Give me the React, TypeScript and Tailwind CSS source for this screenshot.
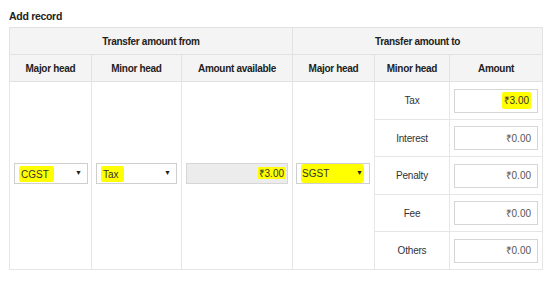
import React from 'react';

const font = { fontFamily: '"Liberation Sans", Arial, sans-serif' };

function Select({ value, wide }: { value: string; wide?: boolean }) {
  // fake select box with highlighter marks on the value
  return (
    <div className="h-[21px] border border-[#cfcfcf] bg-white flex items-center pl-[4px] pr-[5px] text-[10px] text-[#333]">
      {wide ? (
        <div className="flex-1 flex items-center justify-between bg-[#ffff00] h-[19px] rounded-[3px] pl-[1px] pr-[1px]">
          <span>{value}</span>
          <span className="text-[7px] text-[#222]">▼</span>
        </div>
      ) : (
        <>
          <span className="bg-[#ffff00] h-[16px] flex items-center px-[2px] pr-[5px] mt-[2px] rounded-[2px]">{value}</span>
          <span className="ml-auto text-[7px] text-[#222]">▼</span>
        </>
      )}
    </div>
  );
}

function Amount({ value, mark }: { value: string; mark?: boolean }) {
  return (
    <div className="h-[24px] border border-[#d6d6d6] bg-white flex items-center justify-end pr-[6px] text-[10px] text-[#555]">
      {mark ? <span className="bg-[#ffff00] text-[#333] px-[2px] h-[17px] flex items-center rounded-[2px]">{value}</span> : <span>{value}</span>}
    </div>
  );
}

export default function App() {
  const rows = [
    { label: 'Tax', value: '₹3.00', mark: true },
    { label: 'Interest', value: '₹0.00' },
    { label: 'Penalty', value: '₹0.00' },
    { label: 'Fee', value: '₹0.00' },
    { label: 'Others', value: '₹0.00' },
  ];
  const heights = ['h-[38px]', 'h-[37px]', 'h-[38px]', 'h-[37px]', 'h-[38px]'];

  const th = 'border border-[#e2e2e2] bg-[#f4f4f4] font-bold text-[10px] text-[#222] text-center tracking-[-0.3px]';
  const td = 'border border-[#e6e6e6] align-middle';

  return (
    <div className="w-[557px] h-[291px] bg-white" style={font}>
      <div className="pl-[9px] pt-[9px] h-[27px] text-[10.5px] font-bold text-[#222] tracking-[-0.3px]">Add record</div>
      <table className="ml-[9px] w-[533px] border-collapse table-fixed">
        <colgroup>
          <col className="w-[82px]" />
          <col className="w-[90px]" />
          <col className="w-[111px]" />
          <col className="w-[82px]" />
          <col className="w-[75px]" />
          <col className="w-[93px]" />
        </colgroup>
        <thead>
          <tr className="h-[27px]">
            <th colSpan={3} className={th}>Transfer amount from</th>
            <th colSpan={3} className={th}>Transfer amount to</th>
          </tr>
          <tr className="h-[27px]">
            <th className={th}>Major head</th>
            <th className={th}>Minor head</th>
            <th className={th}>Amount available</th>
            <th className={th}>Major head</th>
            <th className={th}>Minor head</th>
            <th className={th}>Amount</th>
          </tr>
        </thead>
        <tbody>
          {rows.map((r, i) => (
            <tr key={r.label} className={heights[i]}>
              {i === 0 && (
                <>
                  <td rowSpan={5} className={td + ' pl-[4px] pr-[3px] pb-[5px]'}>
                    <Select value="CGST" />
                  </td>
                  <td rowSpan={5} className={td + ' px-[4px] pb-[5px]'}>
                    <Select value="Tax" />
                  </td>
                  <td rowSpan={5} className={td + ' pl-[4px] pr-[4px] pb-[5px]'}>
                    <div className="h-[21px] border border-[#d6d6d6] bg-[#ececec] flex items-center justify-end pr-[2px] text-[10px] text-[#333]">
                      <span className="bg-[#ffff00] h-[12px] flex items-center px-[1px]">₹3.00</span>
                    </div>
                  </td>
                  <td rowSpan={5} className={td + ' pl-[3px] pr-[4px] pb-[5px]'}>
                    <Select value="SGST" wide />
                  </td>
                </>
              )}
              <td className={td + ' text-center text-[10px] text-[#333] tracking-[-0.2px]'}>{r.label}</td>
              <td className={td + ' px-[4px]'}>
                <Amount value={r.value} mark={r.mark} />
              </td>
            </tr>
          ))}
        </tbody>
      </table>
    </div>
  );
}
